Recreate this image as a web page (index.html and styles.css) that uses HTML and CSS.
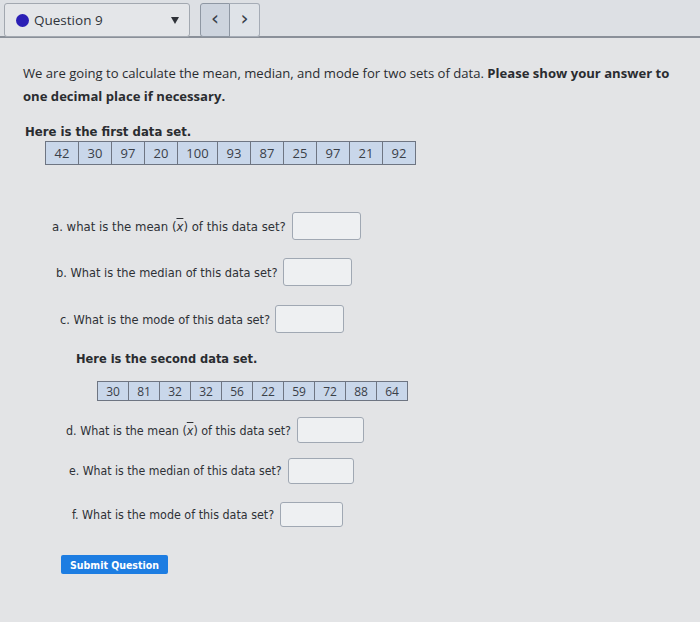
FILE: index.html
```html
<!DOCTYPE html>
<html>
<head>
<meta charset="utf-8">
<link rel="stylesheet" href="styles.css">
</head>
<body>
<header class="topbar">
  <div class="select">
    <span class="dot"></span>
    <span class="qname">Question 9</span>
    <span class="caret"></span>
  </div>
  <div class="nav">
    <button class="navbtn pressed">&lsaquo;</button>
    <button class="navbtn">&rsaquo;</button>
  </div>
</header>
<main class="content">
  <p class="intro"><span>We are going to calculate the mean, median, and mode for two sets of data.</span> <b>Please show your answer to</b><br><b>one decimal place if necessary.</b></p>
  <p class="setlabel first">Here is the first data set.</p>
  <table class="data d1">
    <tr><td>42</td><td>30</td><td>97</td><td>20</td><td class="wide">100</td><td>93</td><td>87</td><td>25</td><td>97</td><td>21</td><td>92</td></tr>
  </table>
  <div class="q qa"><span>a. what is the mean (<span class="xbar">x</span>) of this data set?</span><span class="box"></span></div>
  <div class="q qb"><span>b. What is the median of this data set?</span><span class="box"></span></div>
  <div class="q qc"><span>c. What is the mode of this data set?</span><span class="box"></span></div>
  <p class="setlabel second">Here is the second data set.</p>
  <table class="data d2">
    <tr><td>30</td><td>81</td><td>32</td><td>32</td><td>56</td><td>22</td><td>59</td><td>72</td><td>88</td><td>64</td></tr>
  </table>
  <div class="q qd"><span>d. What is the mean (<span class="xbar">x</span>) of this data set?</span><span class="box"></span></div>
  <div class="q qe"><span>e. What is the median of this data set?</span><span class="box"></span></div>
  <div class="q qf"><span>f. What is the mode of this data set?</span><span class="box"></span></div>
  <button class="submit">Submit Question</button>
</main>
</body>
</html>
```
FILE: styles.css
```css
html, body { margin: 0; padding: 0; }
body {
  width: 700px;
  height: 622px;
  background: #e3e4e6;
  font-family: "DejaVu Sans Condensed", "DejaVu Sans", sans-serif;
  color: #2a2c30;
  overflow: hidden;
}
.topbar {
  height: 38px;
  background: #dde0e4;
  border-bottom: 2px solid #8a9099;
  display: flex;
  align-items: flex-start;
  padding: 3px 0 0 4px;
  box-sizing: border-box;
  gap: 10px;
}
.select {
  width: 186px;
  height: 34px;
  box-sizing: border-box;
  border: 1px solid #a2a8b0;
  border-radius: 3px;
  background: #e4e6e9;
  display: flex;
  align-items: center;
  padding-left: 11px;
}
.dot {
  width: 13px;
  height: 13px;
  border-radius: 50%;
  background: #2b1fb5;
  margin-right: 5px;
}
.qname {
  font-family: "Open Sans", sans-serif;
  font-size: 13.5px;
  color: #30343a;
  flex: 1;
}
.caret {
  width: 0; height: 0;
  border-left: 4px solid transparent;
  border-right: 4px solid transparent;
  border-top: 7px solid #2e3238;
  margin-right: 10px;
}
.nav { display: flex; }
.navbtn {
  width: 30px;
  height: 34px;
  border: 1px solid #a5acb6;
  background: #dfe3e8;
  color: #38404a;
  font-family: "DejaVu Sans", sans-serif;
  font-size: 20px;
  line-height: 1;
  padding: 0 0 4px;
  margin: 0;
}
.navbtn.pressed {
  background: #cdd4de;
  border-color: #8e97a3;
  border-radius: 3px 0 0 3px;
}
.navbtn + .navbtn { border-left: none; border-radius: 0 3px 3px 0; }
.content { padding: 24px 0 0 0; }
.intro {
  margin: 0 0 0 23px;
  width: 662px;
  font-family: "Open Sans", sans-serif;
  font-size: 13.1px;
  line-height: 23px;
  color: #2a2c30;
}
.intro b { font-weight: 700; }
.setlabel {
  font-weight: bold;
  font-size: 13px;
  margin: 0;
  color: #2a2c30;
}
.setlabel.first { margin: 16px 0 0 25px; }
.setlabel.second { margin: 18px 0 0 76px; font-size: 12.7px; }
.data {
  border-collapse: collapse;
  font-family: "Open Sans", sans-serif;
  font-size: 13px;
  color: #3a4048;
}
.data td {
  background: #c9d7ea;
  border: 1px solid #6e7582;
  text-align: center;
  padding: 0;
}
.d1 { margin: 2px 0 0 45px; }
.d1 td { width: 32px; height: 22px; }
.d1 td.wide { width: 39px; }
.d2 { margin: 15px 0 0 97px; font-size: 12px; }
.d2 td { width: 30px; height: 18px; }
.q {
  display: flex;
  align-items: center;
  font-size: 13px;
  color: #2e3136;
}
.box {
  width: 69px;
  height: 28px;
  box-sizing: border-box;
  border: 1px solid #a0a8b3;
  border-radius: 3px;
  background: #eef0f2;
  margin-left: 6px;
}
.xbar { font-style: italic; text-decoration: overline; }
.qa { margin: 47px 0 0 52px; }
.qb { margin: 18px 0 0 56px; font-size: 12.7px; }
.qc { margin: 19px 0 0 60px; font-size: 12.7px; }
.qc .box, .qb .box { margin-left: 5px; }
.qd { margin: 16px 0 0 66px; font-size: 12.4px; }
.qd .box { width: 67px; height: 26px; }
.qe { margin: 15px 0 0 69px; font-size: 12.2px; }
.qe .box { width: 66px; height: 26px; }
.qf { margin: 18px 0 0 72px; font-size: 12.4px; }
.qf .box { width: 63px; height: 25px; }
.submit {
  display: block;
  margin: 28px 0 0 61px;
  width: 107px;
  height: 19px;
  background: #1d7de2;
  color: #ffffff;
  border: none;
  border-radius: 2px;
  font-family: "DejaVu Sans Condensed", sans-serif;
  font-weight: bold;
  font-size: 10.5px;
  padding: 0;
}
```
